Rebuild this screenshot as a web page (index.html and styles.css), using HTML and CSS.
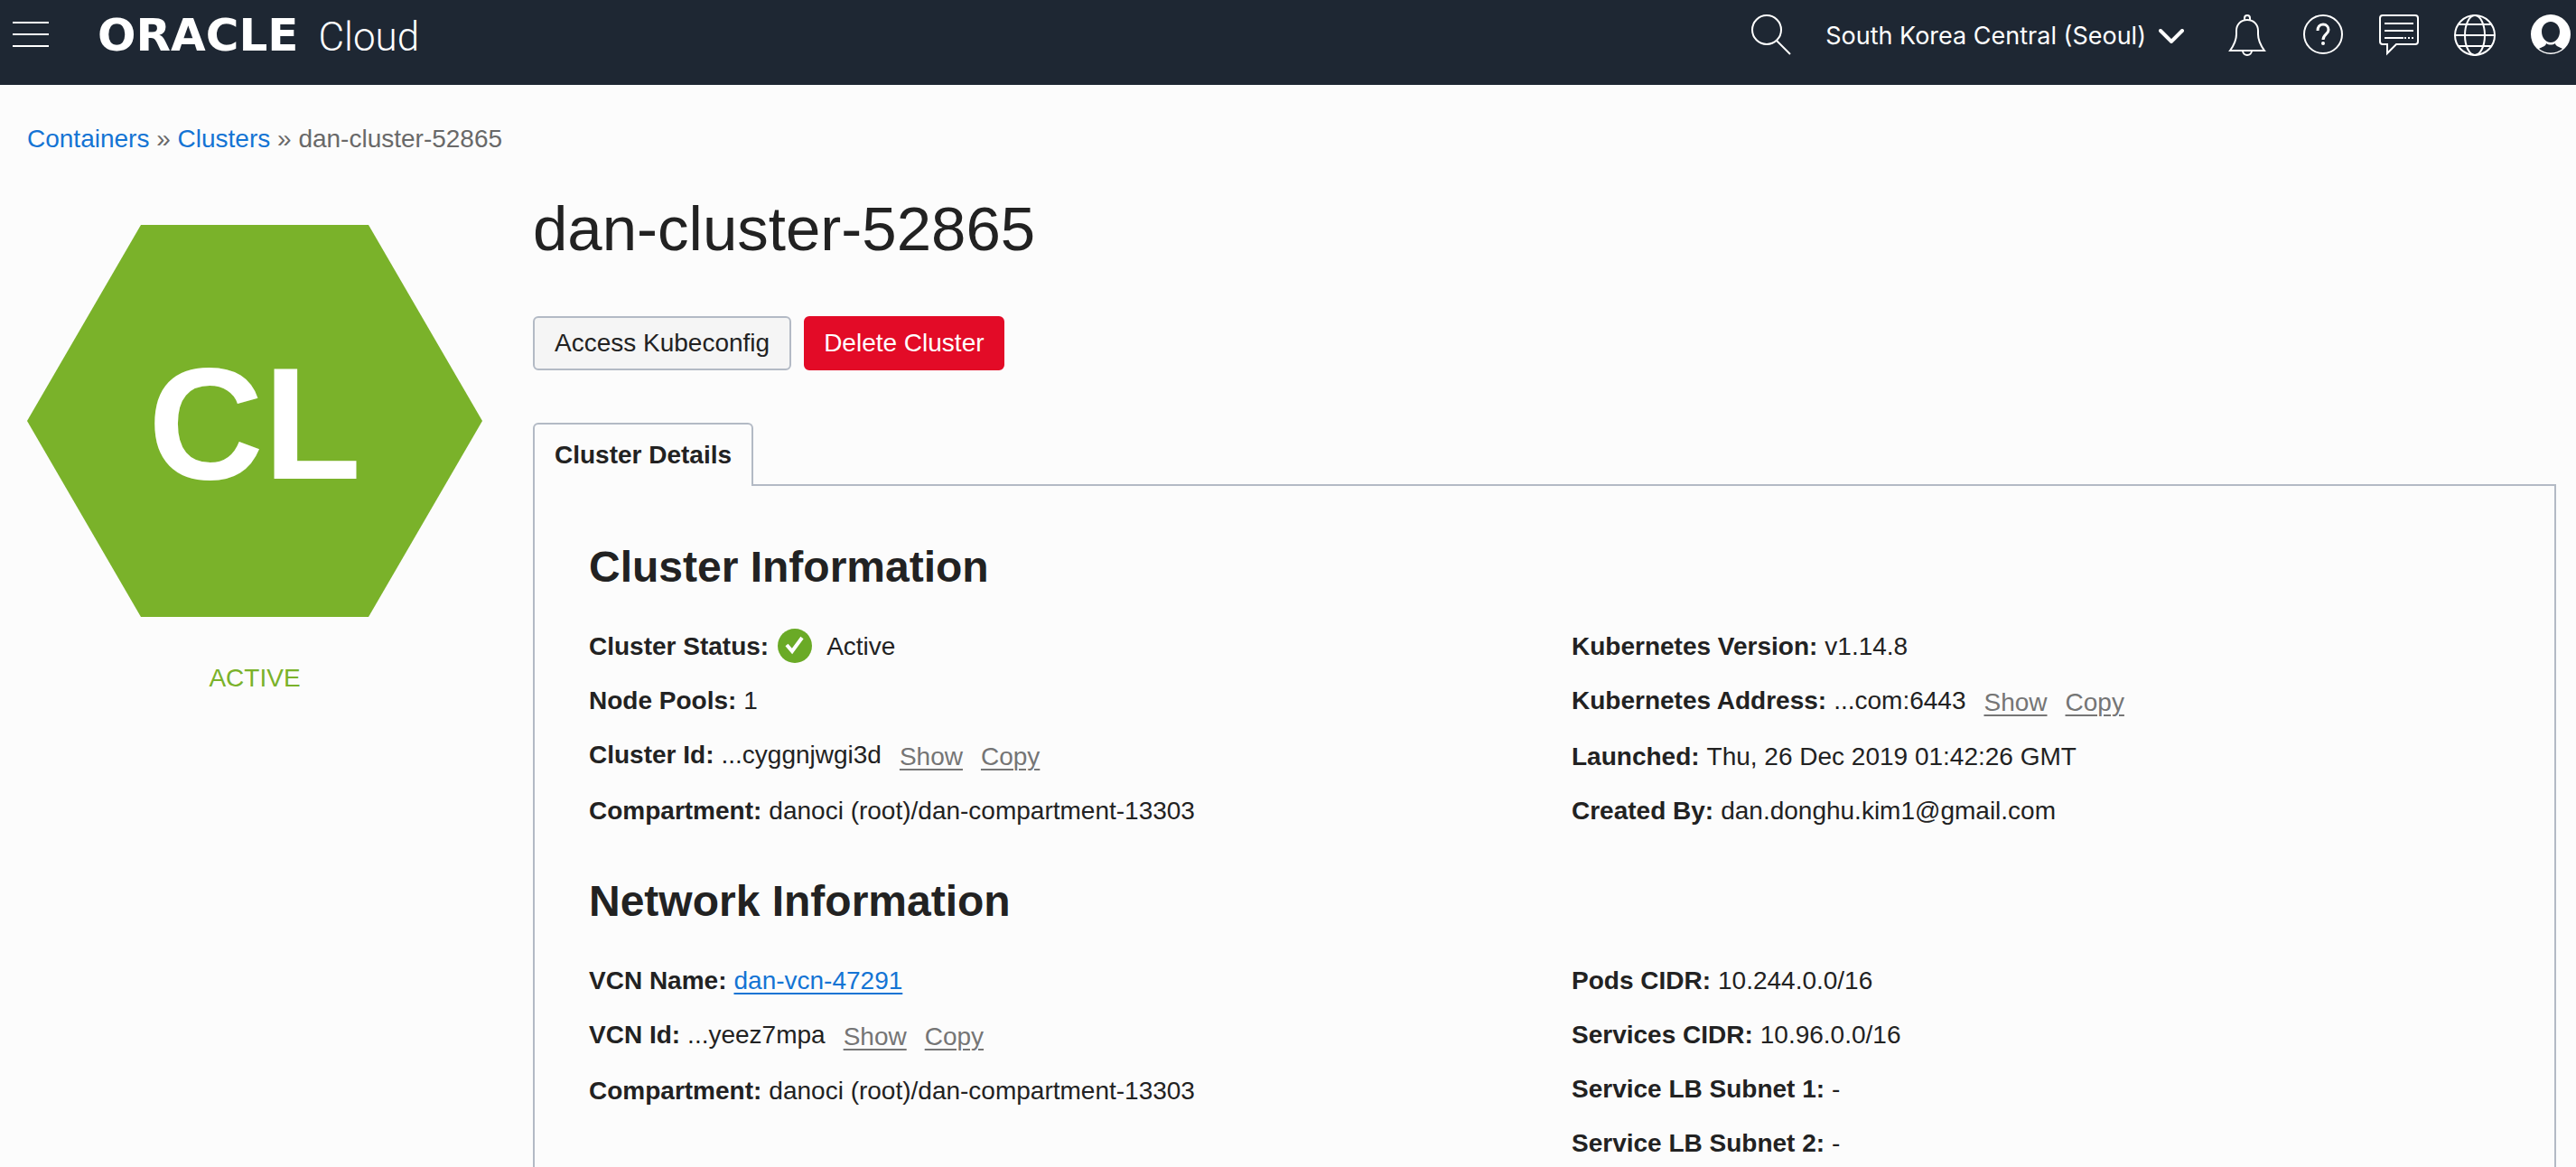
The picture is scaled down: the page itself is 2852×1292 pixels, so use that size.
FILE: index.html
```html
<!DOCTYPE html>
<html lang="en">
<head>
<meta charset="utf-8">
<title>dan-cluster-52865 - Oracle Cloud</title>
<link rel="stylesheet" href="styles.css">
</head>
<body>
<header class="topbar">
  <button class="icon-button" type="button" aria-label="Open navigation menu">
    <svg class="menu-icon" viewBox="0 0 40 28" fill="#fff"><path d="M0 0h40v2H0zM0 13h40v2H0zM0 26h40v2H0z"/></svg>
  </button>
  <a class="brand" href="#"><span class="brand-name">ORACLE</span> <span class="brand-product">Cloud</span></a>
  <div class="tools">
    <button class="icon-button" type="button" aria-label="Search">
      <svg class="icon" viewBox="0 0 48 48"><circle cx="19" cy="19" r="16"/><path d="M30 31l15 15"/></svg>
    </button>
    <button class="region" type="button">South Korea Central (Seoul)
      <svg class="chevron" viewBox="0 0 28 16"><path d="M2 2l12 12L26 2"/></svg>
    </button>
    <div class="tool-icons">
      <button class="icon-button" type="button" aria-label="Announcements">
        <svg class="icon" viewBox="0 0 48 48"><path d="M21 8V6a3 3 0 0 1 6 0v2M5 42h38c-5-7-7-12-7-18v-4c0-7-5-12-12-12S12 13 12 20v4c0 6-2 11-7 18zM19 42a5 5 0 0 0 10 0"/></svg>
      </button>
      <button class="icon-button" type="button" aria-label="Help">
        <svg class="icon" viewBox="0 0 48 48"><circle cx="24" cy="24" r="21"/><path stroke-width="3" d="M18 20c0-4 2-7 6-7s6 3 6 6c0 5-6 5-6 11"/><circle cx="24" cy="34" r="2" fill="#fff" stroke="none"/></svg>
      </button>
      <button class="icon-button" type="button" aria-label="Chat">
        <svg class="icon" viewBox="0 0 48 48"><path d="M6 3h36a3 3 0 0 1 3 3v26a3 3 0 0 1-3 3H21L11 45V35H6a3 3 0 0 1-3-3V6a3 3 0 0 1 3-3z"/><path d="M8 12h32M8 20h32M8 28h21M30 28h2M34 28h2M38 28h2"/></svg>
      </button>
      <button class="icon-button" type="button" aria-label="Language">
        <svg class="icon" viewBox="0 0 48 48"><circle cx="24" cy="25" r="22"/><ellipse cx="24" cy="25" rx="11" ry="22"/><path d="M2 25h44M6 13h36M6 37h36"/></svg>
      </button>
      <button class="icon-button" type="button" aria-label="Profile">
        <svg class="icon" viewBox="0 0 48 48"><path fill="#fff" stroke="none" fill-rule="evenodd" d="M24 2a22 22 0 1 1 0 44 22 22 0 0 1 0-44zm0 8c-6 0-10 5-10 11s4 12 10 12 10-6 10-12-4-11-10-11zm-5 24c0 3-5 4-8 6 8 6 18 6 26 0-3-2-8-3-8-6-3 2-7 2-10 0z"/></svg>
      </button>
    </div>
  </div>
</header>

<main class="page">
  <nav class="breadcrumb" aria-label="Breadcrumb"><a href="#">Containers</a> » <a href="#">Clusters</a> » <span>dan-cluster-52865</span></nav>
  <div class="layout">
    <aside class="summary">
      <svg class="hexagon" viewBox="0 0 504 434" role="img" aria-label="Cluster">
        <polygon points="126,0 378,0 504,217 378,434 126,434 0,217" fill="#7ab22a"/>
        <text class="hexagon-text" x="252" y="281" text-anchor="middle">CL</text>
      </svg>
      <p class="summary-state">ACTIVE</p>
    </aside>
    <div class="content">
      <h1 class="title">dan-cluster-52865</h1>
      <div class="actions">
        <button class="button" type="button">Access Kubeconfig</button>
        <button class="button button-danger" type="button">Delete Cluster</button>
      </div>
      <div class="tabs" role="tablist">
        <button class="tab" type="button" role="tab" aria-selected="true">Cluster Details</button>
      </div>
      <div class="panel" role="tabpanel">
        <section class="section">
          <h2 class="section-title">Cluster Information</h2>
          <div class="columns">
            <dl class="details">
              <div class="row row-status"><dt>Cluster Status:</dt><dd class="status"><svg class="status-icon" viewBox="0 0 38 38"><circle cx="19" cy="19" r="19" fill="#6aaa26"/><path d="M10 18l6 7L27 10" fill="none" stroke="#fff" stroke-width="4"/></svg>Active</dd></div>
              <div class="row"><dt>Node Pools:</dt><dd>1</dd></div>
              <div class="row row-links"><dt>Cluster Id:</dt><dd>...cyggnjwgi3d</dd><dd class="row-actions"><a href="#">Show</a><a href="#">Copy</a></dd></div>
              <div class="row"><dt>Compartment:</dt><dd>danoci (root)/dan-compartment-13303</dd></div>
            </dl>
            <dl class="details">
              <div class="row"><dt>Kubernetes Version:</dt><dd>v1.14.8</dd></div>
              <div class="row row-links"><dt>Kubernetes Address:</dt><dd>...com:6443</dd><dd class="row-actions"><a href="#">Show</a><a href="#">Copy</a></dd></div>
              <div class="row"><dt>Launched:</dt><dd>Thu, 26 Dec 2019 01:42:26 GMT</dd></div>
              <div class="row"><dt>Created By:</dt><dd>dan.donghu.kim1@gmail.com</dd></div>
            </dl>
          </div>
        </section>
        <section class="section">
          <h2 class="section-title">Network Information</h2>
          <div class="columns">
            <dl class="details">
              <div class="row"><dt>VCN Name:</dt><dd><a href="#">dan-vcn-47291</a></dd></div>
              <div class="row row-links"><dt>VCN Id:</dt><dd>...yeez7mpa</dd><dd class="row-actions"><a href="#">Show</a><a href="#">Copy</a></dd></div>
              <div class="row"><dt>Compartment:</dt><dd>danoci (root)/dan-compartment-13303</dd></div>
            </dl>
            <dl class="details">
              <div class="row"><dt>Pods CIDR:</dt><dd>10.244.0.0/16</dd></div>
              <div class="row"><dt>Services CIDR:</dt><dd>10.96.0.0/16</dd></div>
              <div class="row"><dt>Service LB Subnet 1:</dt><dd>-</dd></div>
              <div class="row"><dt>Service LB Subnet 2:</dt><dd>-</dd></div>
            </dl>
          </div>
        </section>
      </div>
    </div>
  </div>
</main>
</body>
</html>
```
FILE: styles.css
```css
* {
  box-sizing: border-box;
}

body {
  display: flex;
  flex-direction: column;
  min-height: 100vh;
  margin: 0;
  background: #fcfcfc;
  color: #222;
  font-family: "Liberation Sans", Arial, sans-serif;
  font-size: 28px;
  line-height: 40px;
}

h1, h2, p, dl, dd {
  margin: 0;
}

button {
  margin: 0;
  font: inherit;
  cursor: pointer;
}

a {
  color: #1474d4;
}

/* Top bar */
.topbar {
  display: flex;
  align-items: center;
  padding: 14px 4px 32px 10px;
  background: #1e2733;
  color: #fff;
}

.icon-button {
  display: flex;
  align-items: center;
  justify-content: center;
  width: 48px;
  height: 48px;
  padding: 0;
  border: 0;
  background: none;
}

.icon {
  width: 48px;
  height: 48px;
  fill: none;
  stroke: #fff;
  stroke-width: 2;
}

.menu-icon {
  width: 40px;
  height: 28px;
}

.brand {
  display: flex;
  align-items: baseline;
  gap: 22px;
  margin-left: 50px;
  padding-top: 4px;
  color: #fff;
  line-height: 40px;
  text-decoration: none;
}

.brand-name {
  font-family: "DejaVu Sans", sans-serif;
  font-size: 50px;
  font-weight: 700;
}

.brand-product {
  font-family: Roboto, sans-serif;
  font-size: 44px;
  font-weight: 300;
}

.tools {
  display: flex;
  align-items: center;
  gap: 36px;
  margin-left: auto;
}

.region {
  display: flex;
  align-items: center;
  gap: 14px;
  padding: 4px 10px 0 0;
  border: 0;
  background: none;
  color: #fff;
  font-family: Inter, sans-serif;
  font-size: 27px;
}

.chevron {
  width: 28px;
  height: 16px;
  fill: none;
  stroke: #fff;
  stroke-linecap: round;
  stroke-width: 4;
}

.tool-icons {
  display: flex;
  gap: 36px;
}

/* Page */
.page {
  display: flex;
  flex: 1;
  flex-direction: column;
  padding: 40px 22px 0 30px;
}

.breadcrumb {
  color: #696969;
}

.breadcrumb a {
  text-decoration: none;
}

.layout {
  display: grid;
  flex: 1;
  grid-template-columns: 504px 1fr;
  gap: 56px;
  margin-top: 40px;
}

.summary {
  padding-top: 35px;
  color: #7ab22a;
  text-align: center;
}

.hexagon {
  display: block;
  width: 100%;
}

.hexagon-text {
  fill: #fff;
  font-size: 177px;
  font-weight: 700;
}

.summary-state {
  margin-top: 48px;
}

.content {
  display: flex;
  flex-direction: column;
}

.title {
  font-size: 69px;
  font-weight: 400;
  line-height: 80px;
}

.actions {
  display: flex;
  gap: 14px;
  margin-top: 56px;
}

.button {
  padding: 8px 22px;
  border: 2px solid #b3bac5;
  border-radius: 6px;
  background: #f5f5f5;
  color: #222;
}

.button-danger {
  padding: 8px 20px;
  border-color: #e30b27;
  background: #e30b27;
  color: #fff;
}

.tabs {
  display: flex;
  margin-top: 58px;
}

.tab {
  z-index: 1;
  margin-bottom: -2px;
  padding: 14px 22px;
  border: 2px solid #b3bac5;
  border-bottom: 0;
  border-radius: 6px 6px 0 0;
  background: #fcfcfc;
  color: #222;
  font-weight: 700;
}

.panel {
  display: flex;
  flex: 1;
  flex-direction: column;
  gap: 52px;
  padding: 62px 0 0 60px;
  border: 2px solid #b3bac5;
  border-bottom: 0;
}

.section-title {
  font-size: 48px;
  font-weight: 700;
  line-height: 56px;
}

.columns {
  display: grid;
  grid-template-columns: 1fr 1fr;
  margin-top: 40px;
}

.details {
  display: flex;
  flex-direction: column;
  gap: 20px;
}

.row {
  display: flex;
  gap: 8px;
}

.row dt {
  font-weight: 700;
}

.row-links {
  height: 42px;
}

.row-status {
  gap: 10px;
}

.status {
  display: flex;
  gap: 16px;
}

.status-icon {
  width: 38px;
  height: 38px;
}

.row-actions {
  display: flex;
  gap: 20px;
  margin-left: 12px;
  padding-top: 2px;
}

.row-actions a {
  color: #757575;
}

.row a {
  text-decoration-thickness: 2px;
  text-underline-offset: 4px;
}
```
